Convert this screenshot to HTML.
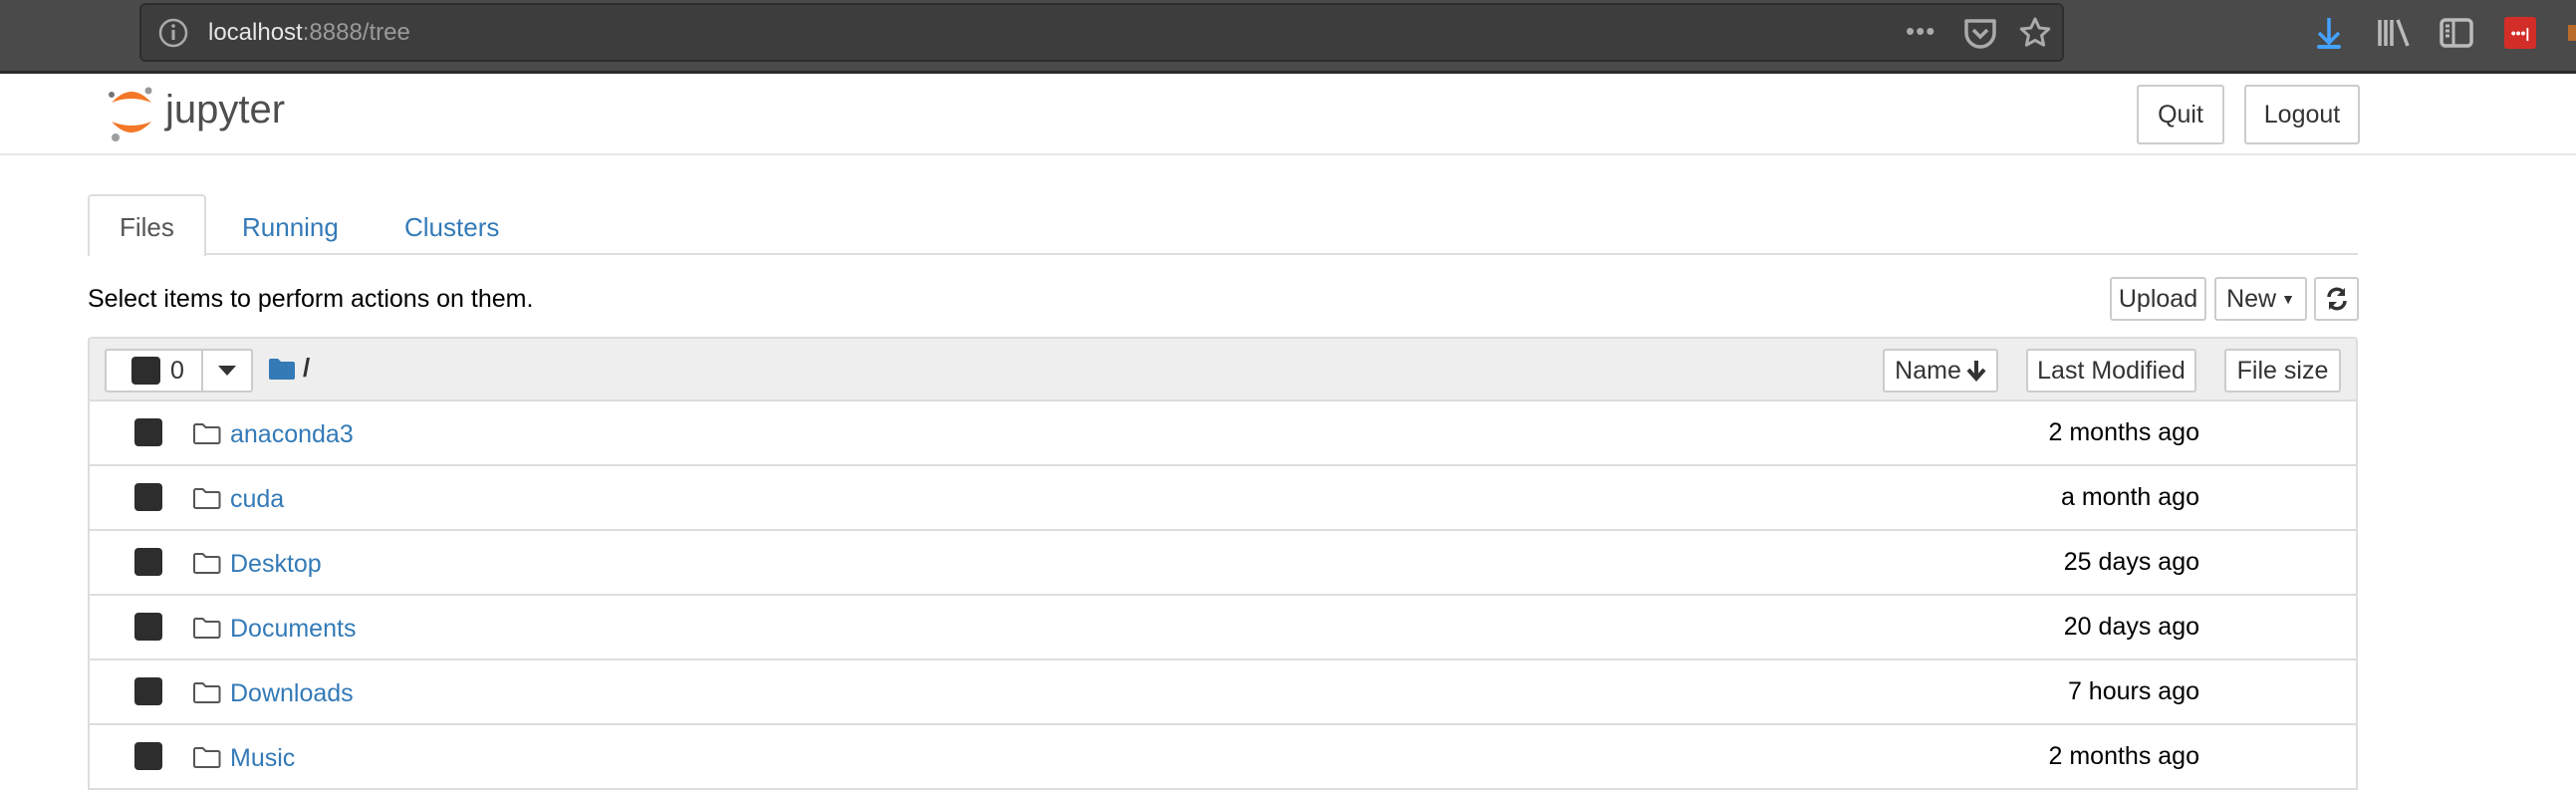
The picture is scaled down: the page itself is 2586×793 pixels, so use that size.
<!DOCTYPE html>
<html><head><meta charset="utf-8"><style>
*{box-sizing:border-box;margin:0;padding:0}
body{width:2586px;height:790px;overflow:hidden;background:#fff;font-family:"Liberation Sans",sans-serif;position:relative;color:#000}
.a{position:absolute}
.tb{left:0;top:0;width:2586px;height:74px;background:#4a4a4a;border-bottom:3px solid #2a2a2a}
.url{left:140px;top:3px;width:1932px;height:59px;background:#3d3d3d;border:2px solid #2e2e2e;border-radius:6px}
.btn{position:absolute;border:2px solid #ccc;border-radius:3px;background:#fff;font-size:25px;color:#333;display:flex;align-items:center;justify-content:center}
.tab{font-size:26px;color:#337ab7}
.row{position:absolute;left:88px;width:2279px;height:65px;border-left:2px solid #ddd;border-right:2px solid #ddd;border-bottom:2px solid #ddd}
.cb{position:absolute;left:45px;top:17px;width:28px;height:28px;background:#2d2d2d;border-radius:4px}
.nm{position:absolute;left:141px;top:19px;font-size:25px;color:#337ab7}
.dt{position:absolute right:157px;top:17px;font-size:25px;color:#000}
.dt{position:absolute;right:157px;top:17px;font-size:25px;color:#000}
.fi{position:absolute;left:104px;top:22px}
</style></head><body>
<div class="a tb"></div>
<div class="a url"></div>
<svg class="a" style="left:158px;top:17px" width="32" height="32"><circle cx="16" cy="16" r="13" fill="none" stroke="#aaa" stroke-width="2.5"/><rect x="14.5" y="13" width="3" height="10" fill="#aaa"/><circle cx="16" cy="9" r="1.8" fill="#aaa"/></svg>
<div class="a" style="left:209px;top:19px;font-size:24px;color:#e6e6e6">localhost<span style="color:#9a9a9a">:8888/tree</span></div>
<div class="a" style="left:1913px;top:16px;font-size:26px;color:#aaa;letter-spacing:1px">•••</div>
<svg class="a" style="left:1971px;top:18px" width="34" height="32"><path d="M3 3h28v12a14 14 0 0 1-28 0z" fill="none" stroke="#aaa" stroke-width="3.5" stroke-linejoin="round"/><path d="M10 12l7 7 7-7" fill="none" stroke="#aaa" stroke-width="3.5"/></svg>
<svg class="a" style="left:2026px;top:16px" width="34" height="34"><path d="M17 3l4.2 9 9.6 1-7.2 6.6 2 9.6L17 24.4 8.4 29.2l2-9.6L3.2 13l9.6-1z" fill="none" stroke="#aaa" stroke-width="3" stroke-linejoin="round"/></svg>
<svg class="a" style="left:2324px;top:16px" width="28" height="34"><path d="M14 2v24M4 17l10 10 10-10" fill="none" stroke="#45a1ff" stroke-width="3.5"/><rect x="2" y="29" width="24" height="4" rx="2" fill="#45a1ff"/></svg>
<svg class="a" style="left:2387px;top:18px" width="34" height="30"><path d="M2 2v26M8 2v26M14 2v26M20 2l10 26" stroke="#bbb" stroke-width="3.5" fill="none"/></svg>
<svg class="a" style="left:2449px;top:18px" width="34" height="30"><rect x="2" y="2" width="30" height="26" rx="4" fill="none" stroke="#bbb" stroke-width="3.5"/><path d="M14 2v26M6 8h4M6 13h4M6 18h4" stroke="#bbb" stroke-width="3"/></svg>
<div class="a" style="left:2514px;top:17px;width:32px;height:32px;background:#d32d27;border-radius:3px;color:#fff;font-size:14px;font-weight:bold;line-height:32px;text-align:center">•••|</div>
<div class="a" style="left:2578px;top:25px;width:8px;height:16px;background:#b86b2a"></div>

<svg class="a" style="left:105px;top:85px" width="52" height="60"><path d="M7 18 Q27 -4 47 18 Q27 10 7 18z" fill="#f37726"/><path d="M7 37 Q27 59 47 37 Q27 45 7 37z" fill="#f37726"/><circle cx="7" cy="10" r="3" fill="#767677"/><circle cx="44" cy="6" r="3.5" fill="#989798"/><circle cx="11" cy="53" r="4" fill="#9e9e9e"/></svg>
<div class="a" style="left:166px;top:88px;font-size:40px;color:#4e4e4e">jupyter</div>
<div class="btn" style="left:2145px;top:85px;width:88px;height:60px">Quit</div>
<div class="btn" style="left:2253px;top:85px;width:116px;height:60px">Logout</div>
<div class="a" style="left:0;top:154px;width:2586px;height:2px;background:#e7e7e7"></div>

<div class="a" style="left:88px;top:254px;width:2279px;height:2px;background:#ddd"></div>
<div class="a" style="left:88px;top:195px;width:119px;height:62px;background:#fff;border:2px solid #ddd;border-bottom:none;border-radius:4px 4px 0 0"></div>
<div class="a tab" style="left:120px;top:213px;color:#555">Files</div>
<div class="a tab" style="left:243px;top:213px">Running</div>
<div class="a tab" style="left:406px;top:213px">Clusters</div>

<div class="a" style="left:88px;top:286px;font-size:25px">Select items to perform actions on them.</div>
<div class="btn" style="left:2118px;top:278px;width:97px;height:44px">Upload</div>
<div class="btn" style="left:2223px;top:278px;width:93px;height:44px">New <span style="font-size:14px;margin-left:5px">▼</span></div>
<div class="btn" style="left:2323px;top:278px;width:45px;height:44px"><svg width="24" height="26"><path d="M4 11a8 8 0 0 1 14-5M20 15a8 8 0 0 1-14 5" fill="none" stroke="#333" stroke-width="3.5"/><path d="M20 2v8h-8zM4 24v-8h8z" fill="#333"/></svg></div>

<div class="a" style="left:88px;top:338px;width:2279px;height:65px;background:#eee;border:2px solid #ddd;border-radius:4px 4px 0 0"></div>
<div class="a" style="left:105px;top:350px;width:149px;height:44px;background:#fff;border:2px solid #ccc;border-radius:3px"></div>
<div class="a" style="left:202px;top:350px;width:2px;height:44px;background:#ccc"></div>
<div class="a" style="left:132px;top:358px;width:29px;height:28px;background:#2d2d2d;border-radius:4px"></div>
<div class="a" style="left:171px;top:358px;font-size:25px;color:#333">0</div>
<svg class="a" style="left:219px;top:367px" width="18" height="10"><path d="M0 0h18L9 10z" fill="#333"/></svg>
<svg class="a" style="left:270px;top:359px" width="26" height="22"><path d="M0 3a2 2 0 0 1 2-2h7l3 3h12a2 2 0 0 1 2 2v14a2 2 0 0 1-2 2H2a2 2 0 0 1-2-2z" fill="#337ab7"/></svg>
<div class="a" style="left:304px;top:354px;font-size:26px;color:#333;font-weight:bold">/</div>
<div class="btn" style="left:1890px;top:350px;width:116px;height:44px">Name <svg style="margin-left:5px" width="20" height="22"><path d="M10 1v16M2 10l8 9 8-9" fill="none" stroke="#333" stroke-width="4"/></svg></div>
<div class="btn" style="left:2034px;top:350px;width:171px;height:44px">Last Modified</div>
<div class="btn" style="left:2233px;top:350px;width:117px;height:44px">File size</div>

<div class="row" style="top:403px"><div class="cb"></div><svg class="fi" width="28" height="22"><path d="M1 2.5a1.5 1.5 0 0 1 1.5-1.5h7l3 3h12.5a1.5 1.5 0 0 1 1.5 1.5v13a1.5 1.5 0 0 1-1.5 1.5h-22.5a1.5 1.5 0 0 1-1.5-1.5z" fill="none" stroke="#555" stroke-width="2"/></svg><div class="nm">anaconda3</div><div class="dt">2 months ago</div></div>
<div class="row" style="top:468px"><div class="cb"></div><svg class="fi" width="28" height="22"><path d="M1 2.5a1.5 1.5 0 0 1 1.5-1.5h7l3 3h12.5a1.5 1.5 0 0 1 1.5 1.5v13a1.5 1.5 0 0 1-1.5 1.5h-22.5a1.5 1.5 0 0 1-1.5-1.5z" fill="none" stroke="#555" stroke-width="2"/></svg><div class="nm">cuda</div><div class="dt">a month ago</div></div>
<div class="row" style="top:533px"><div class="cb"></div><svg class="fi" width="28" height="22"><path d="M1 2.5a1.5 1.5 0 0 1 1.5-1.5h7l3 3h12.5a1.5 1.5 0 0 1 1.5 1.5v13a1.5 1.5 0 0 1-1.5 1.5h-22.5a1.5 1.5 0 0 1-1.5-1.5z" fill="none" stroke="#555" stroke-width="2"/></svg><div class="nm">Desktop</div><div class="dt">25 days ago</div></div>
<div class="row" style="top:598px"><div class="cb"></div><svg class="fi" width="28" height="22"><path d="M1 2.5a1.5 1.5 0 0 1 1.5-1.5h7l3 3h12.5a1.5 1.5 0 0 1 1.5 1.5v13a1.5 1.5 0 0 1-1.5 1.5h-22.5a1.5 1.5 0 0 1-1.5-1.5z" fill="none" stroke="#555" stroke-width="2"/></svg><div class="nm">Documents</div><div class="dt">20 days ago</div></div>
<div class="row" style="top:663px"><div class="cb"></div><svg class="fi" width="28" height="22"><path d="M1 2.5a1.5 1.5 0 0 1 1.5-1.5h7l3 3h12.5a1.5 1.5 0 0 1 1.5 1.5v13a1.5 1.5 0 0 1-1.5 1.5h-22.5a1.5 1.5 0 0 1-1.5-1.5z" fill="none" stroke="#555" stroke-width="2"/></svg><div class="nm">Downloads</div><div class="dt">7 hours ago</div></div>
<div class="row" style="top:728px"><div class="cb"></div><svg class="fi" width="28" height="22"><path d="M1 2.5a1.5 1.5 0 0 1 1.5-1.5h7l3 3h12.5a1.5 1.5 0 0 1 1.5 1.5v13a1.5 1.5 0 0 1-1.5 1.5h-22.5a1.5 1.5 0 0 1-1.5-1.5z" fill="none" stroke="#555" stroke-width="2"/></svg><div class="nm">Music</div><div class="dt">2 months ago</div></div>
</body></html>
